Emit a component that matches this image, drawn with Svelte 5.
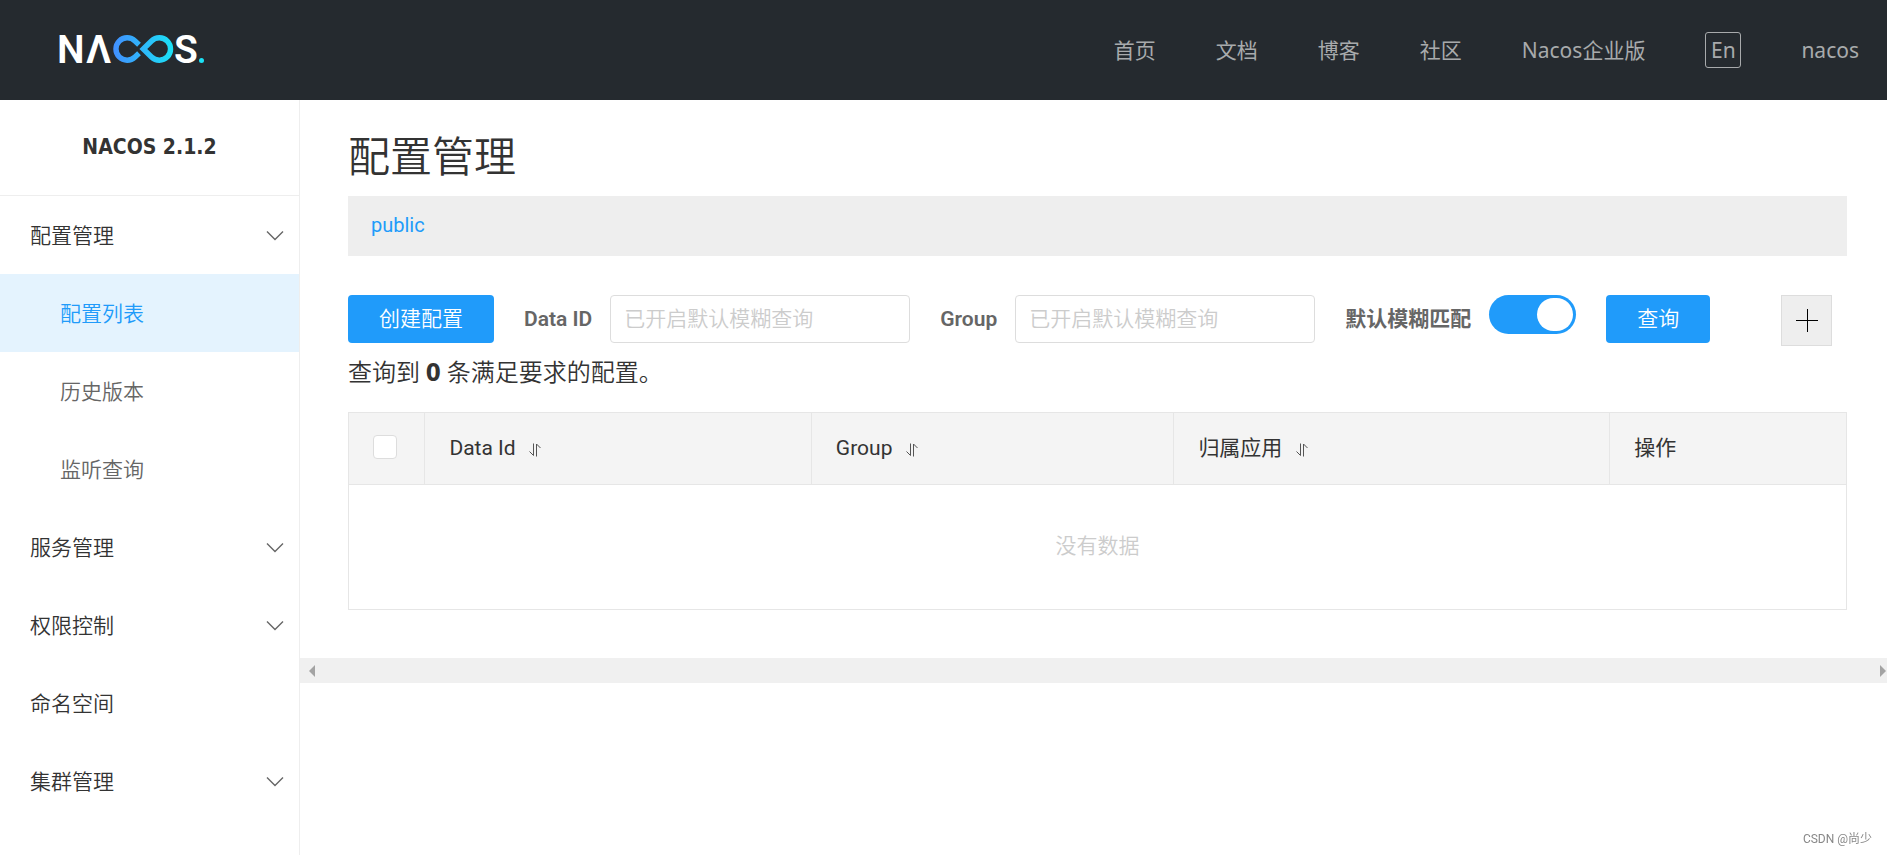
<script lang="ts">
	type MenuItem = { name: string; children?: string[]; leaf?: boolean };

	const navLinks = ['首页', '文档', '博客', '社区', 'Nacos企业版'];

	const menu: MenuItem[] = [
		{ name: '配置管理', children: ['配置列表', '历史版本', '监听查询'] },
		{ name: '服务管理' },
		{ name: '权限控制' },
		{ name: '命名空间', leaf: true },
		{ name: '集群管理' }
	];

	const columns = [
		{ title: 'Data Id', key: 'data-id', sortable: true },
		{ title: 'Group', key: 'group', sortable: true },
		{ title: '归属应用', key: 'app', sortable: true },
		{ title: '操作', key: 'action', sortable: false }
	];

	let current = $state('配置列表');
	let opened = $state(['配置管理']);
	let dataId = $state('');
	let group = $state('');
	let fuzzy = $state(true);
	let total = $state(0);

	function toggle(name: string) {
		opened = opened.includes(name) ? opened.filter((n) => n !== name) : [...opened, name];
	}
</script>

<header class="header">
	<a class="logo" href="#home" aria-label="Nacos">
		<svg width="146" height="30" viewBox="0 0 146 30">
			<defs>
				<linearGradient id="loop" gradientUnits="userSpaceOnUse" x1="54" y1="0" x2="113" y2="0">
					<stop offset="0" stop-color="#4190ff" />
					<stop offset="1" stop-color="#1be1f6" />
				</linearGradient>
			</defs>
			<text class="logo-text" x="-3" y="28">N</text>
			<text class="logo-text" x="26" y="28">Λ</text>
			<text class="logo-text" x="114" y="28">S</text>
			<g fill="none" stroke="url(#loop)" stroke-width="5.4">
				<path d="M79 9.8 L75 6 A11.2 11.2 0 1 0 75 22 L79 18.2" />
				<path d="M83.3 14 L91.5 6 A11.2 11.2 0 1 1 91.5 22 Z" />
			</g>
			<circle cx="141.5" cy="25.5" r="2.5" fill="#1be1f6" />
		</svg>
	</a>
	<nav class="nav">
		{#each navLinks as link}
			<a href="#{link}">{link}</a>
		{/each}
		<button class="lang">En</button>
		<a href="#user">nacos</a>
	</nav>
</header>

<div class="body">
	<aside class="sidebar">
		<h1 class="version">NACOS 2.1.2</h1>
		<ul class="menu">
			{#each menu as item}
				<li>
					{#if item.leaf}
						<a class="menu-item" href="#{item.name}">{item.name}</a>
					{:else}
						<button
							class="menu-item"
							aria-expanded={opened.includes(item.name)}
							onclick={() => toggle(item.name)}
						>
							{item.name}
							<svg width="18" height="12" viewBox="0 0 18 12">
								<path d="M1 1.5 L9 9.5 L17 1.5" fill="none" stroke="#666" stroke-width="1.4" />
							</svg>
						</button>
					{/if}
					{#if item.children && opened.includes(item.name)}
						<ul class="menu">
							{#each item.children as child}
								<li>
									<a
										class="menu-item sub"
										class:active={current === child}
										href="#{child}"
										onclick={() => (current = child)}>{child}</a
									>
								</li>
							{/each}
						</ul>
					{/if}
				</li>
			{/each}
		</ul>
	</aside>

	<main class="main">
		<div class="content">
			<h2 class="title">配置管理</h2>
			<div class="namespace"><a href="#public">public</a></div>

			<form class="filters" onsubmit={(e) => e.preventDefault()}>
				<button class="btn" type="button">创建配置</button>
				<div class="field">
					<label for="dataId">Data ID</label>
					<input id="dataId" class="text" placeholder="已开启默认模糊查询" bind:value={dataId} />
				</div>
				<div class="field">
					<label for="group">Group</label>
					<input id="group" class="text" placeholder="已开启默认模糊查询" bind:value={group} />
				</div>
				<div class="field">
					<label for="fuzzy">默认模糊匹配</label>
					<input id="fuzzy" class="switch" type="checkbox" role="switch" bind:checked={fuzzy} />
				</div>
				<button class="btn" type="submit">查询</button>
				<button class="add" type="button" aria-label="新建">
					<svg width="24" height="24" viewBox="0 0 24 24">
						<path d="M1 11.5 H23 M12.5 0 V23" stroke="#000" />
					</svg>
				</button>
			</form>

			<p class="total">查询到 <strong>{total}</strong> 条满足要求的配置。</p>

			<table class="table">
				<thead>
					<tr>
						<th class="col-check"><input type="checkbox" aria-label="全选" /></th>
						{#each columns as col}
							<th class="col-{col.key}">
								{col.title}
								{#if col.sortable}
									<button class="sort" aria-label="排序">
										<svg width="12" height="14" viewBox="0 0 12 14">
											<path d="M0.5 8.5 L4.5 12.5 V0.5" />
											<path d="M11.5 5 L7.5 1 V13.5" />
										</svg>
									</button>
								{/if}
							</th>
						{/each}
					</tr>
				</thead>
				<tbody>
					<tr>
						<td class="empty" colspan="5">没有数据</td>
					</tr>
				</tbody>
			</table>
		</div>
		<div class="scrollbar">
			<svg width="6" height="12" viewBox="0 0 6 12"><path d="M6 0 V12 L0 6 Z" /></svg>
			<svg width="6" height="12" viewBox="0 0 6 12"><path d="M0 0 V12 L6 6 Z" /></svg>
		</div>
	</main>
</div>

<div class="watermark">CSDN @尚少</div>

<style>
	:global(body) {
		background: #fff;
		color: #333;
		font-family: Roboto, 'Noto Sans CJK SC', sans-serif;
		font-size: 21px;
		font-weight: 400;
		line-height: 30px;
	}

	:global(#app) {
		display: flex;
		flex-direction: column;
		min-height: 100vh;
	}

	a {
		color: inherit;
		text-decoration: none;
	}

	button,
	input {
		margin: 0;
		padding: 0;
		border: 0;
		box-sizing: border-box;
		background: none;
		color: inherit;
		font: inherit;
		cursor: pointer;
	}

	.header {
		display: flex;
		align-items: center;
		justify-content: space-between;
		height: 100px;
		padding: 0 28px 0 60px;
		background: #252a2f;
	}

	.logo svg {
		display: block;
		overflow: visible;
	}

	.logo-text {
		fill: #fff;
		font-family: Roboto, sans-serif;
		font-size: 39px;
		font-weight: 600;
	}

	.nav {
		display: flex;
		align-items: center;
		gap: 60px;
		color: #a8aaac;
		font-family: 'Noto Sans', 'Noto Sans CJK SC', sans-serif;
	}

	.lang {
		width: 36px;
		height: 36px;
		border: 1px solid #a8aaac;
		border-radius: 3px;
		line-height: 32px;
	}

	.body {
		display: flex;
		flex: 1;
	}

	.sidebar {
		flex: none;
		width: 299px;
		border-right: 1px solid #eee;
	}

	.version {
		margin: 0;
		padding: 32px 0 33px;
		border-bottom: 1px solid #eee;
		font-family: 'DejaVu Sans Condensed', 'DejaVu Sans', sans-serif;
		font-size: 21px;
		font-weight: 700;
		line-height: 30px;
		text-align: center;
	}

	.menu {
		margin: 0;
		padding: 0;
		list-style: none;
	}

	.menu-item {
		display: flex;
		align-items: center;
		justify-content: space-between;
		box-sizing: border-box;
		width: 100%;
		height: 78px;
		padding: 1px 15px 0 30px;
		font-weight: 350;
	}

	.sub {
		padding-left: 60px;
		color: #666;
	}

	.sub.active {
		background: #e4f3fe;
		color: #209bfa;
	}

	.main {
		flex: 1;
		min-width: 0;
	}

	.content {
		padding: 31px 40px 48px 48px;
	}

	.title {
		margin: 0 0 11px;
		font-size: 42px;
		font-weight: 350;
		line-height: 54px;
	}

	.namespace {
		padding: 14px 23px 16px;
		background: #eee;
		color: #209bfa;
		font-size: 20px;
	}

	.filters {
		display: flex;
		gap: 30px;
		margin-top: 39px;
		padding-right: 15px;
	}

	.btn {
		height: 48px;
		padding: 0 31px;
		border-radius: 4px;
		background: #209bfa;
		color: #fff;
		font-weight: 350;
	}

	.field {
		display: flex;
		gap: 18px;
	}

	.field label {
		color: #666;
		font-weight: 600;
		line-height: 48px;
	}

	.text {
		width: 300px;
		height: 48px;
		padding: 0 13px;
		border: 1px solid #ddd;
		border-radius: 4px;
		cursor: text;
	}

	.text::placeholder {
		color: #ccc;
		font-weight: 350;
	}

	.switch {
		display: flex;
		width: 87px;
		height: 39px;
		padding: 3px;
		border-radius: 20px;
		background: #ccc;
		appearance: none;
	}

	.switch::before {
		width: 36px;
		height: 33px;
		border-radius: 18px;
		background: #fff;
		content: '';
	}

	.switch:checked {
		justify-content: flex-end;
		background: #209bfa;
	}

	.add {
		display: flex;
		align-items: center;
		justify-content: center;
		width: 51px;
		height: 51px;
		margin-left: auto;
		border: 1px solid #ddd;
		background: #eee;
	}

	.total {
		margin: 9px 0 21px;
		font-size: 24px;
		font-weight: 350;
		line-height: 36px;
	}

	.total strong {
		font-family: 'DejaVu Sans Condensed', 'DejaVu Sans', sans-serif;
		font-weight: 700;
	}

	.table {
		width: 100%;
		border: 1px solid #e6e6e6;
		border-collapse: collapse;
		table-layout: fixed;
	}

	.table th {
		box-sizing: border-box;
		height: 72px;
		padding: 0 24px 1px;
		border: 1px solid #e6e6e6;
		background: #f4f4f4;
		font-weight: 400;
		text-align: left;
	}

	.col-check {
		width: 5.1%;
	}

	.col-data-id {
		width: 25.8%;
	}

	.col-group {
		width: 24.2%;
	}

	.col-app {
		width: 29.1%;
	}

	.col-check input {
		display: block;
		width: 24px;
		height: 24px;
		margin-bottom: 3px;
		border: 1px solid #ddd;
		border-radius: 4px;
		background: #fff;
		appearance: none;
	}

	.sort {
		margin-left: 8px;
		vertical-align: -2px;
	}

	.sort svg {
		display: block;
		fill: none;
		stroke: #555;
	}

	.table .empty {
		height: 122px;
		padding: 0 0 2px;
		color: #ccc;
		font-weight: 350;
		text-align: center;
	}

	.scrollbar {
		display: flex;
		align-items: center;
		justify-content: space-between;
		height: 25px;
		padding: 0 1px 0 9px;
		background: #f0f0f0;
		fill: #a3a3a3;
	}

	.watermark {
		position: fixed;
		right: 15px;
		bottom: 6px;
		color: #888;
		font-size: 12px;
		line-height: 20px;
	}
</style>
